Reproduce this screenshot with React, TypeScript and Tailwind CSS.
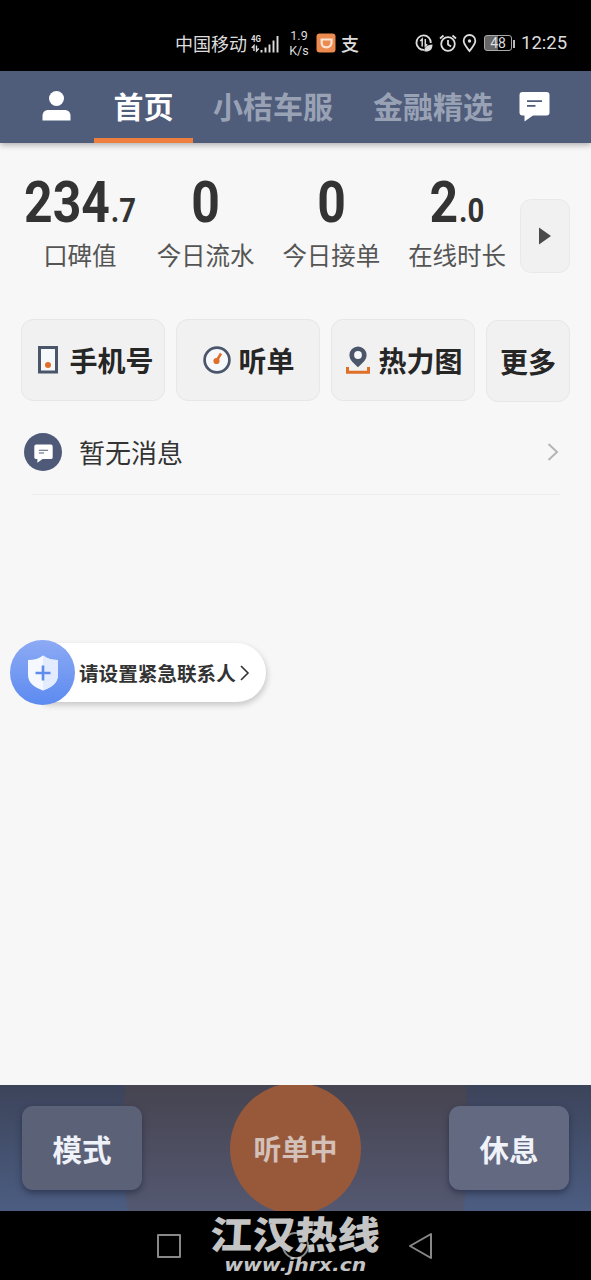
import type { ReactNode } from "react";

const STATS = [
  { label: "口碑值", whole: "234", decimal: ".7" },
  { label: "今日流水", whole: "0", decimal: "" },
  { label: "今日接单", whole: "0", decimal: "" },
  { label: "在线时长", whole: "2", decimal: ".0" },
];

export default function App() {
  return (
    <div className="flex h-[1280px] w-[591px] flex-col overflow-hidden bg-[#f7f7f7] font-['Roboto','Noto_Sans_CJK_SC',sans-serif] whitespace-nowrap">
      <StatusBar />
      <TopNav />

      <main className="flex-1">
        {/* Stats */}
        <div className="flex pt-[27px] pl-[17px]">
          <div className="grid w-[503px] grid-cols-4">
            {STATS.map((s) => (
              <div key={s.label} className="flex flex-col items-center">
                <div className="h-[64px] scale-x-[0.86] text-[58px] leading-[64px] font-bold text-[#333]">
                  {s.whole}
                  {s.decimal && <span className="ml-px text-[34px]">{s.decimal}</span>}
                </div>
                <div className="mt-[5px] text-[24.5px] leading-[36px] text-[#555]">{s.label}</div>
              </div>
            ))}
          </div>
          <button className="mt-[29px] flex h-[74px] w-[50px] items-center justify-center rounded-[11px] border border-[#e9e9e9] bg-[#f1f1f1]">
            <svg width="14" height="18" viewBox="0 0 14 18" fill="#4a4a4a">
              <path d="M1 0.5 13 9 1 17.5Z" />
            </svg>
          </button>
        </div>

        {/* Shortcuts */}
        <div className="mt-[44px] flex gap-[11px] pl-[21px]">
          <Shortcut label="手机号" className="w-[144px] gap-[11px] pl-[6px]">
            <svg width="20" height="28" viewBox="0 0 20 28">
              <rect x="1.5" y="1.5" width="17" height="24.5" fill="#f6f8fb" stroke="#4b566b" strokeWidth="3" />
              <circle cx="10" cy="19" r="3" fill="#e06f28" />
            </svg>
          </Shortcut>
          <Shortcut label="听单" className="w-[144px] gap-[7px] pl-[2px]">
            <svg width="28" height="28" viewBox="0 0 28 28">
              <circle cx="14" cy="14" r="12.4" fill="#f6f8fb" stroke="#4b566b" strokeWidth="2.7" />
              <circle cx="13.5" cy="15" r="3.1" fill="#e06f28" />
              <path d="M13.5 15 18 7.5" stroke="#e06f28" strokeWidth="2.6" />
            </svg>
          </Shortcut>
          <Shortcut label="热力图" className="w-[144px] gap-[8px] pl-[3px]">
            <svg width="24" height="28" viewBox="0 0 24 28">
              <path d="M12 0.5a8.6 8.6 0 0 0-8.6 8.6c0 5.2 4.2 8 8.6 12.2 4.4-4.2 8.6-7 8.6-12.2A8.6 8.6 0 0 0 12 .5Z" fill="#4b566b" />
              <circle cx="12" cy="9" r="3.9" fill="#f6f8fb" />
              <path d="M1.5 21v5.2h21V21" fill="none" stroke="#e06f28" strokeWidth="3" />
            </svg>
          </Shortcut>
          <Shortcut label="更多" className="mt-px w-[84px]" />
        </div>

        {/* Messages */}
        <div className="mr-[32px] ml-[24px] flex h-[92px] items-center pt-[7px]">
          <div className="flex size-[38px] items-center justify-center rounded-full bg-[#4e5a78]">
            <ChatIcon className="mt-[3px] h-[19px] w-[19px]" />
          </div>
          <span className="mt-[4px] ml-[17px] text-[26px] leading-[38px] text-[#333]">暂无消息</span>
          <svg className="ml-auto" width="12" height="20" viewBox="0 0 12 20" fill="none">
            <path d="m1.5 2 8.5 8-8.5 8" stroke="#b5b5b5" strokeWidth="2" />
          </svg>
        </div>
        <div className="mr-[31px] ml-[32px] h-px bg-[#ededed]" />

        {/* Emergency contact */}
        <div className="mt-[145px] ml-[10px] flex items-center">
          <div className="z-10 flex size-[65px] items-center justify-center rounded-full bg-linear-to-b from-[#8daaf4] to-[#5c8af0]">
            <svg width="32" height="36" viewBox="0 0 32 36">
              <path d="M16 .5c4 3 9 4.500 15 4.500v15c0 8-7 12.500-15 15.500C8 32.500 1 28 1 20V5C7 5 12 3.500 16 .5Z" fill="#f5f8ff" />
              <path d="M16 .5c4 3 9 4.500 15 4.500v15c0 8-7 12.500-15 15.500Z" fill="#e3ecff" />
              <path d="M16 10.500v15M8.500 18h15" stroke="#5f8bed" strokeWidth="2.600" />
            </svg>
          </div>
          <div className="-ml-[32px] flex h-[59px] w-[223px] items-center rounded-r-full bg-white pl-[36px] shadow-[1px_3px_6px_rgba(0,0,0,0.2)]">
            <span className="mt-[4px] text-[19.6px] font-bold text-[#333]">请设置紧急联系人</span>
            <svg className="ml-[4px]" width="10" height="16" viewBox="0 0 10 16" fill="none">
              <path d="m1 1 7 7-7 7" stroke="#333" strokeWidth="1.6" />
            </svg>
          </div>
        </div>
      </main>

      <BottomBar />
      <SystemNav />
    </div>
  );
}

function StatusBar() {
  return (
    <div className="flex h-[71px] shrink-0 items-center bg-black pt-[16px] pl-[175px] text-[#ddd]">
      <span className="mt-[2px] text-[18px]">中国移动</span>
      <svg className="ml-[4px]" width="30" height="20" viewBox="0 0 30 20" fill="none">
        <text x="0" y="8" fill="#ddd" fontSize="9" fontWeight="700" textLength="10" lengthAdjust="spacingAndGlyphs">4G</text>
        <path d="M3 17v-5.500L.8 14M5.500 11.500V17l2.200-2.500" stroke="#ddd" strokeWidth="1.400" />
        <path d="M10.500 18.500V16M14.500 18.500v-5M18.500 18.500v-8M22.500 18.500v-12M26.500 18.500v-16.500" stroke="#ddd" strokeWidth="1.900" />
      </svg>
      <div className="-mt-[1px] ml-[6px] flex w-[24px] flex-col items-center text-[12.5px] leading-[15px]">
        <span>1.9</span>
        <span>K/s</span>
      </div>
      <svg className="-mt-[1px] ml-[5px]" width="20" height="20" viewBox="0 0 20 20">
        <rect x=".5" y=".5" width="19" height="19" rx="3" fill="#ec8a50" />
        <path d="M4.500 6.500h11v3c0 3-2.200 4.800-5 4.800S5.700 12.700 5.700 10V6.500" fill="none" stroke="#f9e5d6" strokeWidth="2.200" />
      </svg>
      <span className="mt-[2px] ml-[5px] text-[18px] font-medium">支</span>

      <svg className="-mt-[1px] ml-[56px]" width="18" height="20" viewBox="0 0 18 20" fill="none" stroke="#ddd" strokeWidth="1.800">
        <path d="M9.500 16.800A7.200 7.200 0 1 1 15.800 10" />
        <path d="M7.200 13.500V6L5.200 8M10.300 6v7l1.800-1.800" strokeWidth="1.500" />
        <path d="M9.500 18.500c-.5-4.500 2-6.500 8-7C17.500 16.500 15 19 9.500 18.500Z" fill="#ddd" stroke="none" />
      </svg>
      <svg className="-mt-[2px] ml-[6px]" width="18" height="20" viewBox="0 0 18 20" fill="none" stroke="#ddd" strokeWidth="1.800">
        <circle cx="9" cy="11" r="6.800" />
        <path d="M9 7v4.500l3 2M1 5.500 4.500 2.500M17 5.500 13.500 2.500" />
      </svg>
      <svg className="-mt-[2px] ml-[5px]" width="15" height="20" viewBox="0 0 15 20">
        <path d="M7.500 2a5.800 5.800 0 0 0-5.800 5.800C1.700 11.500 5 14.500 7.500 18c2.500-3.500 5.800-6.500 5.800-10.200A5.800 5.800 0 0 0 7.500 2Z" fill="none" stroke="#ddd" strokeWidth="1.800" />
        <circle cx="7.500" cy="8" r="1.700" fill="#ddd" />
      </svg>
      <div className="-mt-[1px] ml-[7px] flex h-[16px] w-[28px] items-center justify-center rounded-[3px] border border-[#aaa] bg-linear-to-r from-[#666] from-50% to-black to-50% text-[14px]">
        48
      </div>
      <div className="ml-[1px] h-[8px] w-[2px] bg-[#bbb]" />
      <span className="mt-[1px] ml-[6px] text-[18.5px]">12:25</span>
    </div>
  );
}

function TopNav() {
  return (
    <nav className="z-10 flex h-[72px] shrink-0 bg-[#4f5c7a] text-[30px] leading-[73px] font-bold text-[#99a2b5] shadow-[0_2px_6px_rgba(0,0,0,0.3)]">
      <div className="w-[94px] pt-[20px] pl-[42px]">
        <svg width="29" height="30" viewBox="0 0 29 30" fill="#fff">
          <circle cx="14.5" cy="7.5" r="7.5" />
          <path d="M.5 29.5V25c0-4 2.5-6 6-6h16c3.5 0 6 2 6 6v4.5Z" />
        </svg>
      </div>
      <div className="w-[99px] border-b-[5px] border-[#ee7f3e] text-center text-white">首页</div>
      <div className="ml-[20px] w-[120px]">小桔车服</div>
      <div className="ml-[40px] w-[120px]">金融精选</div>
      <ChatIcon className="mt-[20px] ml-[26px] h-[31px] w-[31px]" />
    </nav>
  );
}

function ChatIcon({ className }: { className: string }) {
  return (
    <svg className={className} viewBox="0 0 31 31">
      <path d="M3.500 1h24A3 3 0 0 1 30.500 4v17.500a3 3 0 0 1-3 3H14L5.500 30.500v-6h-2a3 3 0 0 1-3-3V4a3 3 0 0 1 3-3Z" fill="#fff" />
      <path d="M8 10.200h15M8 14.800h8.500" stroke="#4f5c7a" strokeWidth="1.700" />
    </svg>
  );
}

function Shortcut({ label, className, children }: { label: string; className: string; children?: ReactNode }) {
  return (
    <button
      className={`flex h-[82px] shrink-0 items-center justify-center rounded-[12px] border border-[#e7e7e7] bg-[#f1f1f1] text-[28px] font-bold text-[#262626] ${className}`}
    >
      {children}
      <span className="pt-[6px]">{label}</span>
    </button>
  );
}

function BottomBar() {
  return (
    <footer className="relative flex h-[126px] shrink-0 items-center justify-between overflow-hidden bg-linear-to-b from-[#3c445a] to-[#4c5d82] px-[22px] font-bold">
      {/* Glow around the listening button */}
      <div className="absolute top-[-225px] left-[122px] h-[560px] w-[347px] rounded-[50%] bg-[#73482f]/20" />
      <button className="relative h-[84px] w-[120px] rounded-[11px] bg-[#5b6278] pt-[6px] text-[29.5px] text-[#f0f2fa] shadow-[0_3px_6px_rgba(30,36,60,0.6)]">
        模式
      </button>
      <div className="absolute top-[-2px] left-[230px] flex size-[131px] items-center justify-center rounded-full bg-[#98593b] pt-[5px] text-[28px] text-[#d3c1b9]">
        听单中
      </div>
      <button className="relative h-[84px] w-[120px] rounded-[11px] bg-[#636980] pt-[6px] text-[29.5px] text-[#f0f2fa] shadow-[0_3px_6px_rgba(30,36,60,0.6)]">
        休息
      </button>
    </footer>
  );
}

function SystemNav() {
  return (
    <div className="relative flex h-[69px] shrink-0 items-center bg-black pl-[157px]">
      <div className="size-[24px] rounded-[1px] border-2 border-[#888]" />
      <div className="ml-[101px] size-[27px] rounded-full border-2 border-[#888]" />
      <svg className="ml-[99px]" width="25" height="28" viewBox="0 0 25 28" fill="none">
        <path d="M23 2v24L2 14Z" stroke="#888" strokeWidth="2" strokeLinejoin="round" />
      </svg>
      {/* Site watermark */}
      <div className="absolute top-[3px] left-[210px] flex w-[171px] flex-col items-center font-bold text-[#c4c4c4]">
        <span className="scale-y-90 -skew-x-3 text-[42.5px] leading-[44px] font-black">江汉热线</span>
        <span className="-mt-[3px] scale-x-[1.2] font-['DejaVu_Sans','Liberation_Sans',sans-serif] text-[17px] leading-[20px] italic">www.jhrx.cn</span>
      </div>
    </div>
  );
}
